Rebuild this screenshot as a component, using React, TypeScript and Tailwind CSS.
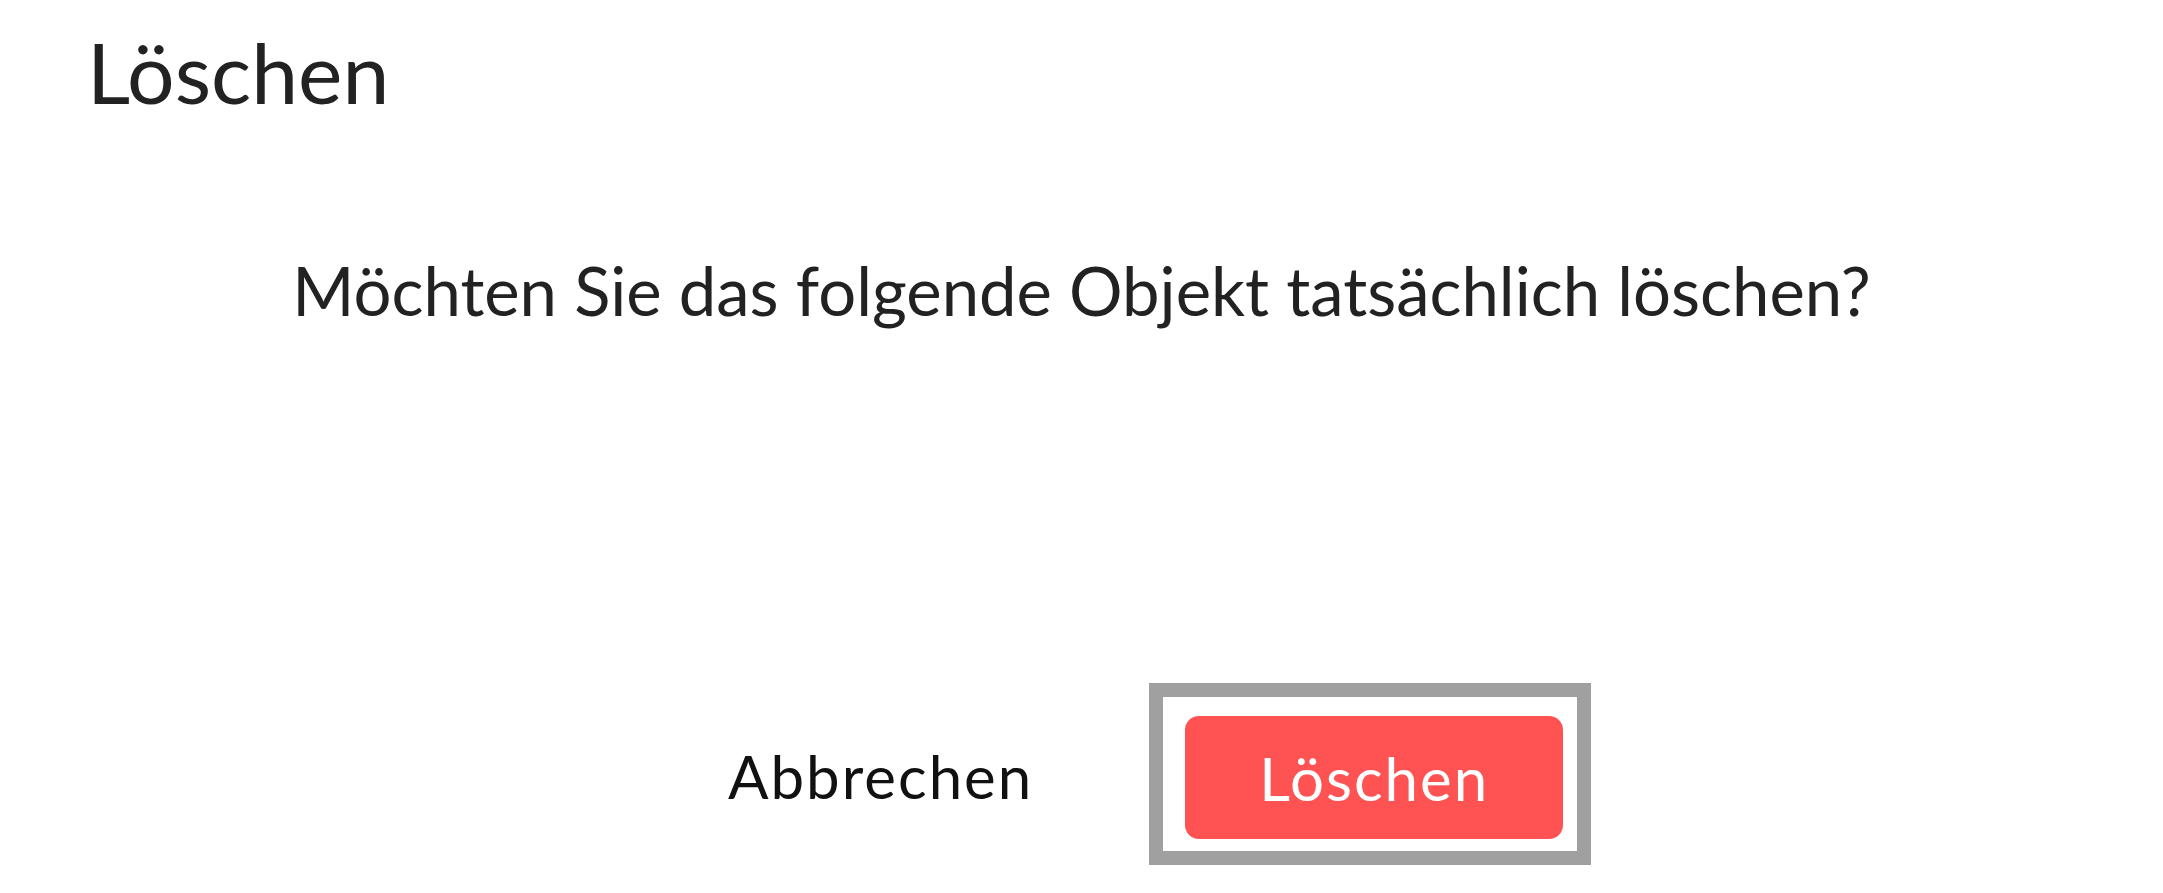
import React from 'react';

const App: React.FC = () => {
  return (
    <div className="w-[2163px] h-[893px] bg-white overflow-hidden font-['Lato','Liberation_Sans',sans-serif] text-[#222222]">
      {/* Title */}
      <h1 className="pl-[87px] pt-[30px] text-[84px] leading-none font-normal">Löschen</h1>

      {/* Message */}
      <p className="mt-[143px] text-center text-[67px] leading-none">
        Möchten Sie das folgende Objekt tatsächlich löschen?
      </p>

      {/* Actions */}
      <div className="mt-[359px] flex items-start pl-[728px]">
        <button className="mt-[63px] text-[60px] leading-none tracking-[2px] text-[#111111]">Abbrechen</button>
        <div className="ml-[116px] border-[14px] border-[#a0a0a0] pl-[22px] pt-[19px] pr-[14px] pb-[12px]">
          <button className="flex h-[123px] w-[378px] items-center justify-center rounded-[14px] bg-[#ff5252] text-[60px] leading-none tracking-[2px] text-white">
            Löschen
          </button>
        </div>
      </div>
    </div>
  );
};

export default App;
